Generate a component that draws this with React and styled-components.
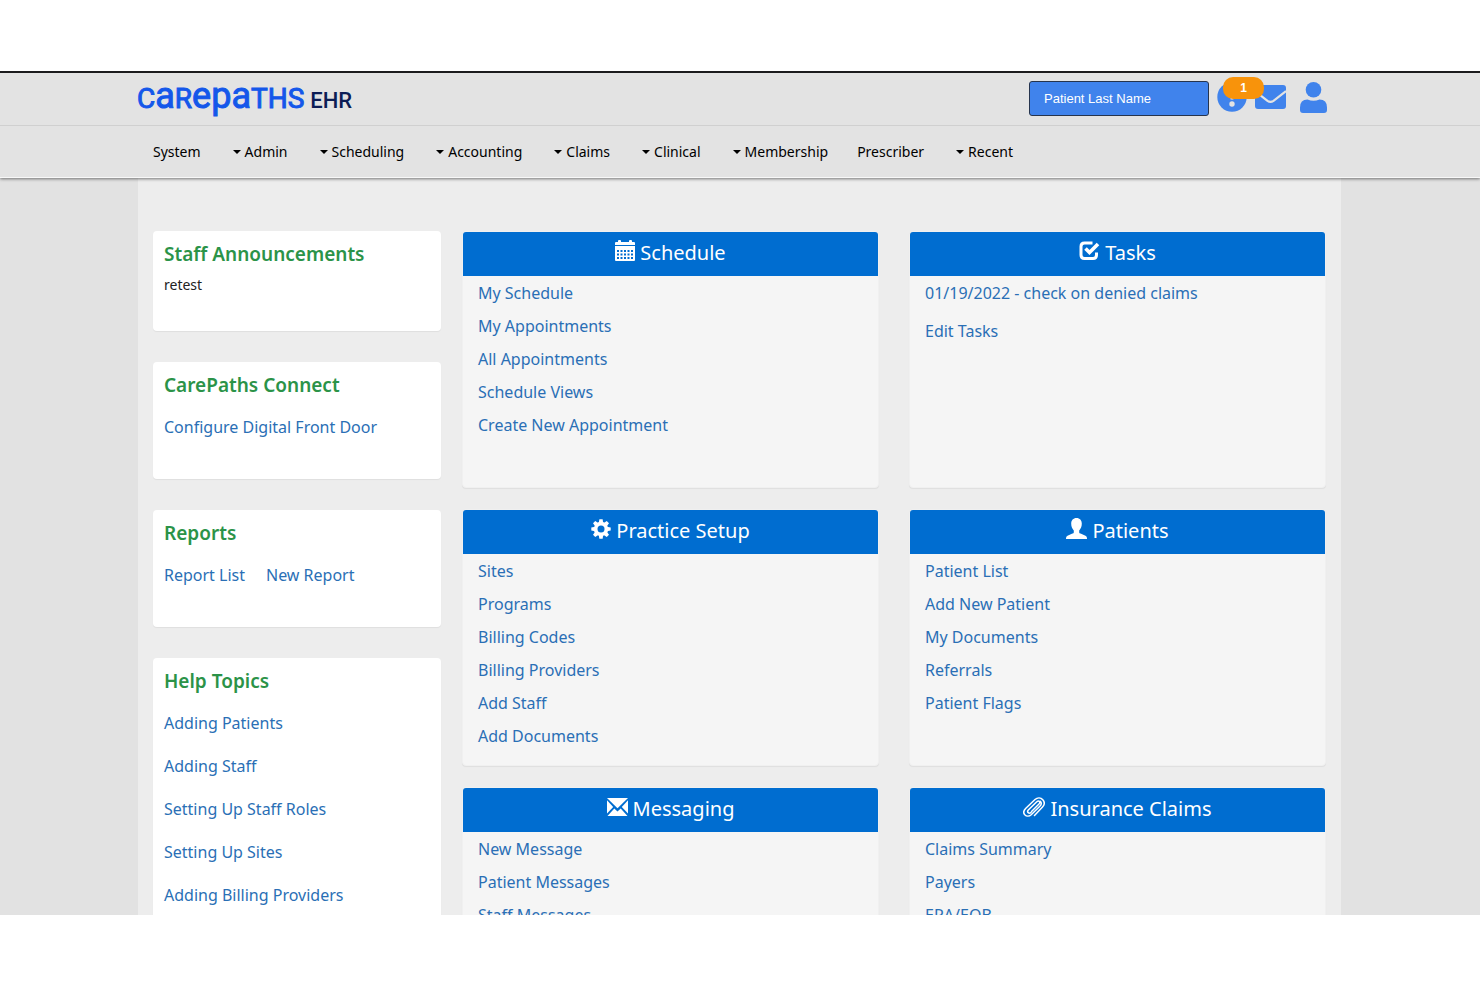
import React from 'react';
import styled, { createGlobalStyle } from 'styled-components';

const Global = createGlobalStyle`
  *, *::before, *::after { box-sizing: border-box; }
  body { margin: 0; background: #fff; font-family: "Noto Sans", "Open Sans", sans-serif; color: #222; }
  h2, ul, p { margin: 0; padding: 0; }
  ul { list-style: none; }
`;

const Page = styled.div`
  display: flex;
  flex-direction: column;
  height: 100vh;
  padding: 71px 0 72px;
`;

const Frame = styled.div`
  flex: 1;
  min-height: 0;
  overflow: hidden;
  display: flex;
  flex-direction: column;
  background: #e2e2e2;
`;

const Header = styled.header`
  flex: none;
  position: relative;
  background: #e3e3e3;
  border-top: 2px solid #1c1c1e;
  border-bottom: 1px solid #f8f8f8;
  box-shadow: 0 1px 3px rgba(0, 0, 0, 0.5);
`;

const TopBar = styled.div`
  display: flex;
  align-items: center;
  justify-content: space-between;
  height: 53px;
  padding: 0 153px 2px 137px;
  border-bottom: 1px solid #d0d0d0;
`;

const Logo = styled.a`
  display: flex;
  align-items: baseline;
  line-height: 50px;
  font-family: "Roboto", sans-serif;
  font-size: 28px;
  color: #1457ea;
  -webkit-text-stroke: 1px #1457ea;
  text-decoration: none;
`;

const Tall = styled.span`
  font-size: 36px;
`;

const LogoSuffix = styled.span`
  margin-left: 6px;
  font-size: 22px;
  font-weight: 500;
  color: #0c1d55;
  -webkit-text-stroke: 0;
`;

const Tools = styled.div`
  display: flex;
  align-items: center;
  gap: 8px;
`;

const Search = styled.input`
  width: 180px;
  height: 35px;
  padding: 0 14px;
  border: 1px solid #26344d;
  border-radius: 3px;
  background: #4083ec;
  color: #fff;
  font-family: "Liberation Sans", sans-serif;
  font-size: 13px;
  &::placeholder { color: #fff; opacity: 1; }
`;

const IconButton = styled.button`
  position: relative;
  display: flex;
  padding: 0;
  border: 0;
  margin: 0 0 2px ${(p) => (p.$apart ? 6 : 0)}px;
  background: none;
  color: #4083ec;
`;

const Badge = styled.span`
  position: absolute;
  z-index: 1;
  top: -5px;
  left: 6px;
  width: 41px;
  height: 22px;
  border-radius: 10px;
  background: #f8930b;
  color: #fff;
  font-size: 12px;
  font-weight: 700;
  line-height: 23px;
  text-align: center;
`;

const Nav = styled.nav`
  display: flex;
  align-items: center;
  gap: 29px;
  height: 51px;
  padding: 0 153px;
`;

const NavLink = styled.a`
  display: flex;
  align-items: center;
  gap: 4px;
  color: #000;
  font-size: 14px;
  line-height: 20px;
  text-decoration: none;
`;

const Caret = styled.span`
  margin-left: 3px;
  border-top: 4px solid #000;
  border-left: 4px solid transparent;
  border-right: 4px solid transparent;
`;

const Body = styled.main`
  flex: 1;
  min-height: 0;
  display: grid;
  grid-template-columns: 288px 1fr;
  gap: 21px;
  margin: 0 139px 0 138px;
  padding: 53px 15px 0;
  background: #ededed;
`;

const Side = styled.aside`
  display: flex;
  flex-direction: column;
  gap: 31px;
`;

const Card = styled.section`
  min-height: ${(p) => (p.$short ? 100 : 117)}px;
  padding: 8px 11px 30px;
  border-radius: 4px;
  background: #fff;
  box-shadow: 0 1px 1px rgba(0, 0, 0, 0.06);
`;

const CardTitle = styled.h2`
  color: #2b9348;
  font-size: 19px;
  font-weight: 600;
  line-height: 30px;
`;

const Note = styled.p`
  font-size: 14px;
  line-height: 32px;
`;

const CardLinks = styled.ul`
  display: flex;
  flex-direction: ${(p) => (p.$inline ? 'row' : 'column')};
  gap: 21px;
  padding-top: 16px;
`;

const Link = styled.a`
  display: block;
  color: #2a6fb5;
  font-size: 16px;
  line-height: 22px;
  white-space: nowrap;
  text-decoration: none;
`;

const Board = styled.div`
  display: grid;
  grid-template-columns: 1fr 1fr;
  grid-auto-rows: 257px;
  column-gap: 30px;
  row-gap: 21px;
`;

const Panel = styled.section`
  border: 1px solid #f0f0f0;
  border-radius: 4px;
  background: #f5f5f5;
  box-shadow: 0 1px 1px rgba(0, 0, 0, 0.06);
`;

const PanelHead = styled.h2`
  display: flex;
  align-items: center;
  justify-content: center;
  gap: 5px;
  height: 44px;
  padding-bottom: 2px;
  border-radius: 3px 3px 0 0;
  background: #006dd0;
  color: #fff;
  font-size: 20px;
  font-weight: 400;
  line-height: 40px;
  svg { margin-bottom: 5px; }
`;

const PanelLinks = styled.ul`
  display: flex;
  flex-direction: column;
  gap: ${(p) => (p.$loose ? 16 : 11)}px;
  padding: 6px 15px;
`;

const GlyphCalendar = () => (
  <svg width="20" height="21" viewBox="0 0 20 21" fill="currentColor" aria-hidden="true">
    <path d="M0 5V3q0-1 1-1h2V1q0-1 1-1h1q1 0 1 1v1h8V1q0-1 1-1h1q1 0 1 1v1h2q1 0 1 1v2z" />
    <path fillRule="evenodd" d="M0 6h20v14q0 1-1 1H1q-1 0-1-1zM2 10v2h2v-2zM5.500 10v2h2v-2zM9 10v2h2v-2zM12.500 10v2h2v-2zM16 10v2h2v-2zM2 13.500v2h2v-2zM5.500 13.500v2h2v-2zM9 13.500v2h2v-2zM12.500 13.500v2h2v-2zM16 13.500v2h2v-2zM2 17v2h2v-2zM5.500 17v2h2v-2zM9 17v2h2v-2zM12.500 17v2h2v-2zM16 17v2h2v-2z" />
  </svg>
);

const GlyphCheck = () => (
  <svg width="21" height="20" viewBox="0 0 21 20" fill="none" stroke="currentColor" strokeWidth="3" aria-hidden="true">
    <path d="M13.500 2H5.500Q2 2 2 5.500V14Q2 17.500 5.500 17.500H14Q17.500 17.500 17.500 14V11.500" />
    <path d="M6.500 7.500L10.500 11.500L19 3" strokeWidth="3.600" />
  </svg>
);

const GlyphCog = () => (
  <svg width="20" height="20" viewBox="0 0 20 20" aria-hidden="true">
    <g fill="currentColor">
      {[0, 45, 90, 135].map((angle) => (
        <path key={angle} transform={`rotate(${angle} 10 10)`} d="M8.400 0.300h3.200l.7 4v11.400l-.7 4H8.400l-.7-4V4.300z" />
      ))}
      <circle cx="10" cy="10" r="7.200" />
    </g>
    <circle cx="10" cy="10" r="3.500" fill="#006dd0" />
  </svg>
);

const GlyphUser = () => (
  <svg width="21" height="21" viewBox="0 0 21 21" fill="currentColor" aria-hidden="true">
    <path d="M10.500 0C13.800 0 15.800 2.300 15.800 5.600C15.800 8.600 14.800 11 13.200 12.500V14.200C13.200 15 13.800 15.300 14.600 15.600L19.500 17.800Q21 18.600 21 20.300V21H0V20.300Q0 18.600 1.500 17.800L6.400 15.600C7.200 15.300 7.800 15 7.800 14.200V12.500C6.200 11 5.200 8.600 5.200 5.600C5.200 2.300 7.200 0 10.500 0Z" />
  </svg>
);

const GlyphEnvelope = () => (
  <svg width="21" height="18" viewBox="0 0 21 18" fill="currentColor" aria-hidden="true">
    <path d="M0 0H21L10.500 10.300Z" />
    <path d="M0 2.200L6.200 9L0 15.500Z" />
    <path d="M21 2.200L14.800 9L21 15.500Z" />
    <path d="M0.500 18L7.300 10.500L10.500 13.600L13.700 10.500L20.500 18Z" />
  </svg>
);

const GlyphClip = () => (
  <svg width="22" height="20" viewBox="0 0 22 20" fill="none" stroke="currentColor" strokeWidth="1.500" strokeLinecap="round" aria-hidden="true">
    <path d="M8.500 14.500L16 7C18 5 15.800 2.800 13.800 4.800L5.300 13C3.500 15 6 17.300 8 15.500M11.500 18.500L19.500 10C21.500 7.800 21.800 5 19.800 2.800C17.800 0.500 14.500 0.400 12 2.500L2.600 11.500C0.500 13.700 0.200 16 1.800 17.800C3.500 19.600 6.200 19.500 8.200 17.700L16.800 9.300C18.300 7.800 18.700 5.800 17.300 4.300" />
  </svg>
);

const AlertIcon = () => (
  <svg width="30" height="30" viewBox="0 0 30 30" aria-hidden="true">
    <circle cx="15" cy="15" r="14.700" fill="currentColor" />
    <path d="M13 6h4l-.6 11.500h-2.800z" fill="#e3e3e3" />
    <circle cx="15" cy="22" r="2.700" fill="#e3e3e3" />
  </svg>
);

const MailIcon = () => (
  <svg width="31" height="24" viewBox="0 0 31 24" aria-hidden="true">
    <rect width="31" height="24" rx="3" fill="currentColor" />
    <path d="M0 6L12.500 15.800Q15.500 17.800 18.500 15.800L31 6" fill="none" stroke="#e3e3e3" strokeWidth="2.200" />
  </svg>
);

const UserIcon = () => (
  <svg width="27" height="31" viewBox="0 0 27 31" fill="currentColor" aria-hidden="true">
    <circle cx="13.500" cy="7.800" r="7.800" />
    <path d="M7.500 17.500Q13.500 20 19.500 17.500Q27 17.500 27 25.500V28Q27 31 24 31H3Q0 31 0 28V25.500Q0 17.500 7.500 17.500Z" />
  </svg>
);

const menu = [
  ['System', false], ['Admin', true], ['Scheduling', true], ['Accounting', true], ['Claims', true],
  ['Clinical', true], ['Membership', true], ['Prescriber', false], ['Recent', true],
];

const cards = [
  { title: 'Staff Announcements', note: 'retest' },
  { title: 'CarePaths Connect', links: ['Configure Digital Front Door'] },
  { title: 'Reports', links: ['Report List', 'New Report'], inline: true },
  { title: 'Help Topics', links: ['Adding Patients', 'Adding Staff', 'Setting Up Staff Roles', 'Setting Up Sites', 'Adding Billing Providers'] },
];

const panels = [
  { title: 'Schedule', Glyph: GlyphCalendar, links: ['My Schedule', 'My Appointments', 'All Appointments', 'Schedule Views', 'Create New Appointment'] },
  { title: 'Tasks', Glyph: GlyphCheck, loose: true, links: ['01/19/2022 - check on denied claims', 'Edit Tasks'] },
  { title: 'Practice Setup', Glyph: GlyphCog, links: ['Sites', 'Programs', 'Billing Codes', 'Billing Providers', 'Add Staff', 'Add Documents'] },
  { title: 'Patients', Glyph: GlyphUser, links: ['Patient List', 'Add New Patient', 'My Documents', 'Referrals', 'Patient Flags'] },
  { title: 'Messaging', Glyph: GlyphEnvelope, links: ['New Message', 'Patient Messages', 'Staff Messages'] },
  { title: 'Insurance Claims', Glyph: GlyphClip, links: ['Claims Summary', 'Payers', 'ERA/EOB'] },
];

const LinkItems = ({ links }) => links.map((text) => (
  <li key={text}><Link href="#">{text}</Link></li>
));

export default function App() {
  return (
    <Page>
      <Global />
      <Frame>
        <Header>
          <TopBar>
            <Logo href="#" aria-label="CarePaths EHR">
              C<Tall>a</Tall>R<Tall>epa</Tall>THS
              <LogoSuffix>EHR</LogoSuffix>
            </Logo>
            <Tools>
              <Search type="text" aria-label="Patient Last Name" placeholder="Patient Last Name" />
              <IconButton type="button" aria-label="Alerts"><AlertIcon /><Badge>1</Badge></IconButton>
              <IconButton type="button" aria-label="Messages"><MailIcon /></IconButton>
              <IconButton type="button" aria-label="Account" $apart><UserIcon /></IconButton>
            </Tools>
          </TopBar>
          <Nav>
            {menu.map(([label, drop]) => (
              <NavLink href="#" key={label}>{drop && <Caret />}{label}</NavLink>
            ))}
          </Nav>
        </Header>
        <Body>
          <Side>
            {cards.map((c) => (
              <Card key={c.title} $short={Boolean(c.note)}>
                <CardTitle>{c.title}</CardTitle>
                {c.note && <Note>{c.note}</Note>}
                {c.links && <CardLinks $inline={c.inline}><LinkItems links={c.links} /></CardLinks>}
              </Card>
            ))}
          </Side>
          <Board>
            {panels.map(({ title, Glyph, links, loose }) => (
              <Panel key={title}>
                <PanelHead><Glyph />{title}</PanelHead>
                <PanelLinks $loose={loose}><LinkItems links={links} /></PanelLinks>
              </Panel>
            ))}
          </Board>
        </Body>
      </Frame>
    </Page>
  );
}
